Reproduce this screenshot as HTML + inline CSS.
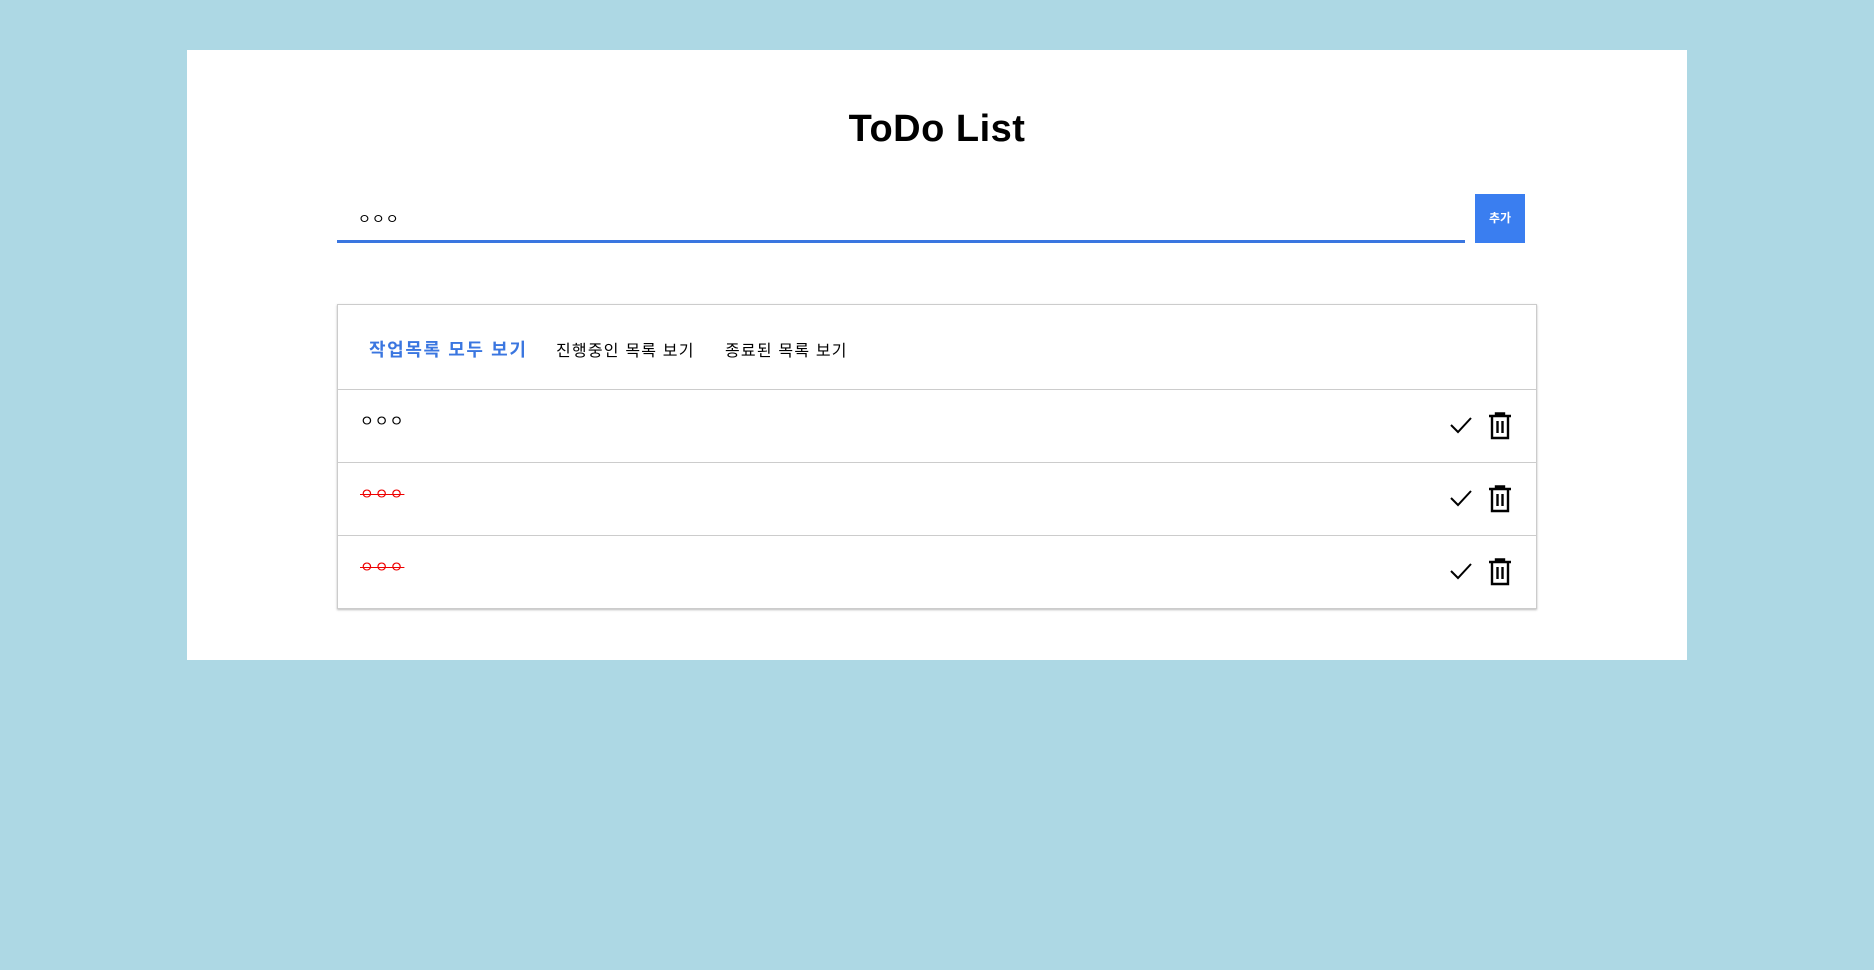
<!DOCTYPE html>
<html><head><meta charset="utf-8"><style>
body{margin:0;background:#add8e4;width:1874px;height:970px;position:relative;font-family:"Liberation Sans","Noto Sans CJK KR",sans-serif;overflow:hidden}
.card{position:absolute;left:187px;top:50px;width:1500px;height:610px;background:#fff}
h1{position:absolute;left:187px;width:1500px;top:104px;margin:0;text-align:center;font-size:38px;font-weight:bold;line-height:50px;color:#000;letter-spacing:0.5px}
.inp{position:absolute;left:337px;top:194px;width:1128px;height:46px;border-bottom:3px solid #3a76e0}
.inp span{position:absolute;left:21px;top:15px;font-size:14px;letter-spacing:1px}
.btn{position:absolute;left:1475px;top:194px;width:50px;height:49px;background:#3a7ef0;color:#fff;font-size:12px;font-weight:bold;text-align:center;line-height:49px}
.list{position:absolute;left:337px;top:304px;width:1198px;height:303px;border:1px solid #ccc;box-shadow:0 1px 2px #bbb}
.tabs{height:84px;border-bottom:1px solid #ccc;position:relative}
.tabs span{position:absolute;top:32px;font-size:16px;letter-spacing:1.2px}
.row{height:72px;border-bottom:1px solid #ccc;position:relative}
.row:last-child{border-bottom:none}
.row .t{position:absolute;left:22px;top:20px;font-size:15px;letter-spacing:1px}
.row .s{color:#e00;text-decoration:line-through}
.row svg{position:absolute;top:22px}
</style></head><body>
<div class="card"></div>
<h1>ToDo List</h1>
<div class="inp"><span>ㅇㅇㅇ</span></div>
<div class="btn">추가</div>
<div class="list">
<div class="tabs"><span style="left:31px;color:#3a76e0;font-weight:bold;font-size:18px;letter-spacing:1.6px;top:31px">작업목록 모두 보기</span><span style="left:218px">진행중인 목록 보기</span><span style="left:387px">종료된 목록 보기</span></div>
<div class="row"><span class="t">ㅇㅇㅇ</span>
<svg style="left:1110px" width="26" height="26" viewBox="0 0 26 26"><path d="M3 13l7 7L23 6" fill="none" stroke="#000" stroke-width="2"/></svg>
<svg style="left:1150px" width="24" height="28" viewBox="0 0 24 28"><path d="M1 4h22M8 4V1.5h8V4M4 4v22h16V4M9.5 9v12M14.5 9v12" fill="none" stroke="#000" stroke-width="2.4"/></svg></div>
<div class="row"><span class="t s">ㅇㅇㅇ</span>
<svg style="left:1110px" width="26" height="26" viewBox="0 0 26 26"><path d="M3 13l7 7L23 6" fill="none" stroke="#000" stroke-width="2"/></svg>
<svg style="left:1150px" width="24" height="28" viewBox="0 0 24 28"><path d="M1 4h22M8 4V1.5h8V4M4 4v22h16V4M9.5 9v12M14.5 9v12" fill="none" stroke="#000" stroke-width="2.4"/></svg></div>
<div class="row"><span class="t s">ㅇㅇㅇ</span>
<svg style="left:1110px" width="26" height="26" viewBox="0 0 26 26"><path d="M3 13l7 7L23 6" fill="none" stroke="#000" stroke-width="2"/></svg>
<svg style="left:1150px" width="24" height="28" viewBox="0 0 24 28"><path d="M1 4h22M8 4V1.5h8V4M4 4v22h16V4M9.5 9v12M14.5 9v12" fill="none" stroke="#000" stroke-width="2.4"/></svg></div>
</div>
</body></html>
